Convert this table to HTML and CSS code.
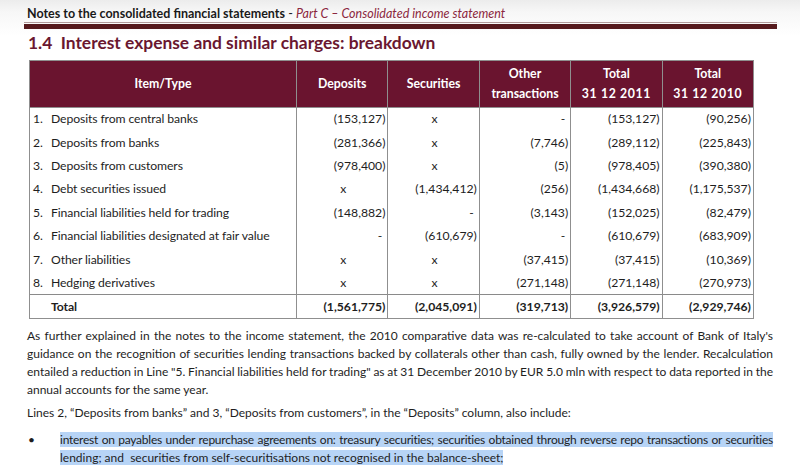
FILE: index.html
```html
<!DOCTYPE html>
<html>
<head>
<meta charset="utf-8">
<link rel="stylesheet" href="styles.css">
</head>
<body>
<div class="page">
  <div class="running-head"><b>Notes to the consolidated financial statements</b> - <i class="part">Part C – Consolidated income statement</i></div>
  <div class="rule"></div>
  <h1 class="title">1.4&nbsp; Interest expense and similar charges: breakdown</h1>
  <table class="fin">
    <colgroup>
      <col class="c-item"><col class="c-num"><col class="c-num"><col class="c-num"><col class="c-num"><col class="c-num">
    </colgroup>
    <thead>
      <tr>
        <th>Item/Type</th>
        <th>Deposits</th>
        <th>Securities</th>
        <th><span class="h1">Other</span><span class="h2">transactions</span></th>
        <th><span class="h1">Total</span><span class="h2 date">31 12 2011</span></th>
        <th><span class="h1">Total</span><span class="h2 date">31 12 2010</span></th>
      </tr>
    </thead>
    <tbody>
      <tr><td class="item"><span class="no">1.</span>Deposits from central banks</td><td>(153,127)</td><td class="x">x</td><td class="dash">-</td><td>(153,127)</td><td>(90,256)</td></tr>
      <tr><td class="item"><span class="no">2.</span>Deposits from banks</td><td>(281,366)</td><td class="x">x</td><td>(7,746)</td><td>(289,112)</td><td>(225,843)</td></tr>
      <tr><td class="item"><span class="no">3.</span>Deposits from customers</td><td>(978,400)</td><td class="x">x</td><td>(5)</td><td>(978,405)</td><td>(390,380)</td></tr>
      <tr><td class="item"><span class="no">4.</span>Debt securities issued</td><td class="x">x</td><td>(1,434,412)</td><td>(256)</td><td>(1,434,668)</td><td>(1,175,537)</td></tr>
      <tr><td class="item"><span class="no">5.</span>Financial liabilities held for trading</td><td>(148,882)</td><td class="dash">-</td><td>(3,143)</td><td>(152,025)</td><td>(82,479)</td></tr>
      <tr><td class="item"><span class="no">6.</span>Financial liabilities designated at fair value</td><td class="dash">-</td><td>(610,679)</td><td class="dash">-</td><td>(610,679)</td><td>(683,909)</td></tr>
      <tr><td class="item"><span class="no">7.</span>Other liabilities</td><td class="x">x</td><td class="x">x</td><td>(37,415)</td><td>(37,415)</td><td>(10,369)</td></tr>
      <tr><td class="item"><span class="no">8.</span>Hedging derivatives</td><td class="x">x</td><td class="x">x</td><td>(271,148)</td><td>(271,148)</td><td>(270,973)</td></tr>
      <tr class="total"><td class="item"><span class="no"></span>Total</td><td>(1,561,775)</td><td>(2,045,091)</td><td>(319,713)</td><td>(3,926,579)</td><td>(2,929,746)</td></tr>
    </tbody>
  </table>
  <p class="para just">As further explained in the notes to the income statement, the 2010 comparative data was re-calculated to take account of Bank of Italy's guidance on the recognition of securities lending transactions backed by collaterals other than cash, fully owned by the lender. Recalculation entailed a reduction in Line "5. Financial liabilities held for trading" as at 31 December 2010 by EUR 5.0 mln with respect to data reported in the <span class="tail">annual accounts for the same year.</span></p>
  <p class="para second">Lines 2, “Deposits from banks” and 3, “Deposits from customers”, in the “Deposits” column, also include:</p>
  <div class="bullet">
    <span class="dot">•</span>
    <p class="btext"><span class="sel">interest on payables under repurchase agreements on: treasury securities; securities obtained through reverse repo transactions or securities <span class="tail">lending; and&nbsp; securities from self-securitisations not recognised in the balance-sheet;</span></span></p>
  </div>
</div>
</body>
</html>
```

FILE: styles.css
```css
html, body {
  margin: 0;
  padding: 0;
}
body {
  width: 800px;
  height: 472px;
  overflow: hidden;
  background: linear-gradient(to bottom, #ececec 0px, #f7f7f7 12px, #ffffff 36px);
  font-family: Lato, "Open Sans", sans-serif;
  color: #1e1e1e;
}
.page {
  padding: 0 27px 0 27px;
}
.running-head {
  padding-top: 6px;
  height: 16px;
  line-height: 16px;
  font-size: 12.5px;
  color: #1a1a1a;
}
.running-head b {
  font-weight: 700;
}
.part {
  color: #8c2840;
}
.rule {
  margin: 0 -4px 0 -3px;
  height: 1px;
  border-top: 1px solid #b29c9c;
  border-bottom: 5px solid #561a1d;
}
.title {
  margin: 0;
  height: 31px;
  line-height: 27px;
  font-size: 17.4px;
  font-weight: 700;
  color: #6a1730;
  box-sizing: border-box;
  padding: 0 0 4px 1px;
}
.fin {
  margin-left: 2px;
  border-collapse: collapse;
  width: 724px;
  table-layout: fixed;
  font-size: 12.2px;
  border: 1px solid #8f8f8f;
}
.c-item { width: 267px; }
.c-num { width: 91.4px; }
.fin th {
  background: #6a142f;
  color: #ffffff;
  font-weight: 700;
  font-size: 12.3px;
  height: 46px;
  padding: 0;
  border: 1px solid #8f8f8f;
  text-align: center;
  vertical-align: middle;
  line-height: 20px;
}
.h1, .h2 {
  display: block;
}
.date {
  letter-spacing: 0.6px;
}
.fin td {
  height: 23.4px;
  padding: 0 2px 0 4px;
  border-left: 1px solid #8f8f8f;
  border-right: 1px solid #8f8f8f;
  text-align: right;
  white-space: nowrap;
  line-height: 18px;
  box-sizing: border-box;
}
.fin td.item {
  text-align: left;
  padding-left: 3px;
  letter-spacing: -0.1px;
}
.no {
  display: inline-block;
  width: 18px;
}
.fin td.x {
  text-align: center;
}
.fin td.dash {
  padding-right: 5px;
}
.fin tr.total td {
  font-weight: 700;
  height: 24px;
  border-top: 1px solid #8a8a8a;
}
.para {
  margin: 0;
  font-size: 12px;
  line-height: 18px;
}
.just {
  margin-top: 8px;
  text-align: justify;
  word-spacing: -1px;
}
.second {
  margin-top: 5px;
}
.bullet {
  display: flex;
  margin-top: 9px;
}
.dot {
  width: 32px;
  flex: none;
  font-size: 12px;
  line-height: 18px;
  padding-left: 1px;
}
.btext {
  margin: 0;
  font-size: 12px;
  line-height: 18px;
  text-align: justify;
  letter-spacing: -0.25px;
  word-spacing: -1px;
}
.tail {
  letter-spacing: 0;
  word-spacing: 0;
}
.sel {
  background: #b7d4f6;
}
```
